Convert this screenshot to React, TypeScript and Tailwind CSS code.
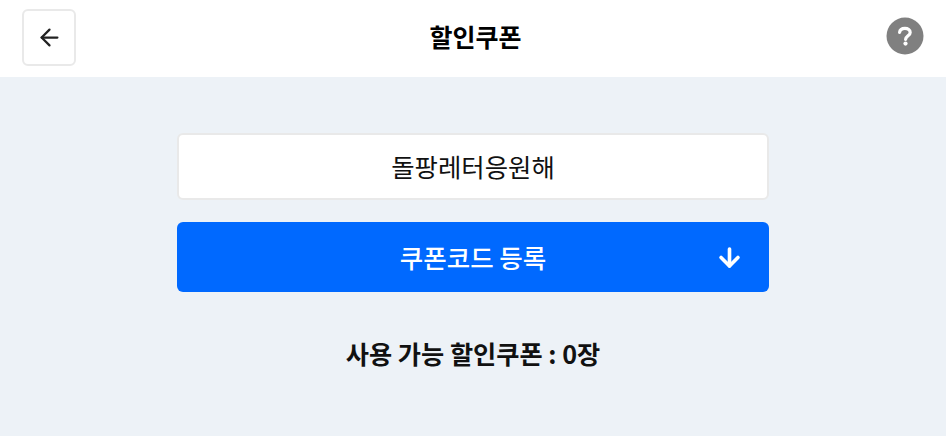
import { ArrowLeft, ArrowDown } from 'lucide-react';

const fontStack = { fontFamily: '"Noto Sans CJK KR", "Noto Sans", sans-serif' };

function HelpIcon() {
    return (
        <svg width="38" height="38" viewBox="0 0 38 38" className="mb-[5px]">
            <circle cx="19" cy="19" r="18.5" fill="#808080" />
            <path
                d="M13.6 15.4C13.9 12.6 16 11.3 18.9 11.3C22 11.3 24.2 12.9 24.2 15.4C24.2 18.8 20 18.8 19.6 22.4"
                fill="none"
                stroke="#fff"
                strokeWidth="3.2"
                strokeLinecap="round"
            />
            <circle cx="19.5" cy="26.6" r="2.1" fill="#fff" />
        </svg>
    );
}

export default function App() {
    return (
        <div className="w-[946px] h-[436px] overflow-hidden bg-[#edf2f7] flex flex-col" style={fontStack}>
            <header className="h-[77px] bg-white flex items-center justify-between px-[22px]">
                <button className="w-[54px] h-[57px] mb-[2px] rounded-[6px] border-2 border-[#e9e9e9] bg-white flex items-center justify-center text-[#222]">
                    <ArrowLeft size={27} strokeWidth={2} />
                </button>
                <h1 className="text-[25px] leading-none font-bold text-black mb-[5px] mr-[11px]">할인쿠폰</h1>
                <HelpIcon />
            </header>

            <main className="flex flex-col items-center pt-[56px]">
                <div className="w-[592px] h-[67px] bg-white border-2 border-[#e9e9e9] rounded-[6px] flex items-center justify-center text-[25.4px] leading-none text-[#111]">
                    돌팡레터응원해
                </div>
                <button className="w-[592px] h-[70px] mt-[22px] bg-[#0069ff] rounded-[6px] flex items-center justify-center relative text-white text-[25.5px] leading-none font-medium">
                    쿠폰코드 등록
                    <ArrowDown size={29} strokeWidth={3} className="absolute right-[25px] top-[21px]" />
                </button>
                <p className="mt-[45px] text-[25.2px] leading-[32px] font-bold text-[#111]">사용 가능 할인쿠폰 : 0장</p>
            </main>
        </div>
    );
}
